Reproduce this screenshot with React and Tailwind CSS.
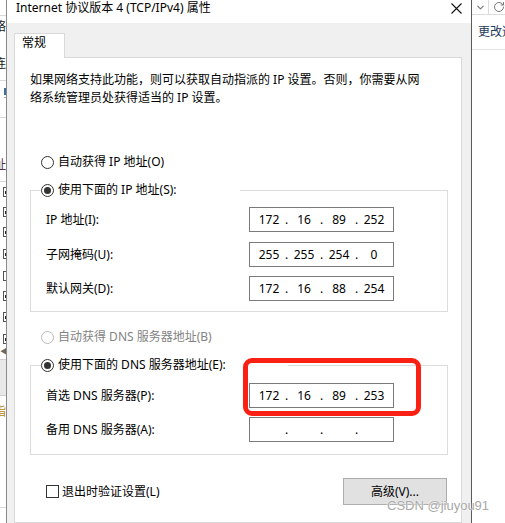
import React from 'react'
import { ChevronDown, RotateCw } from 'lucide-react'

const font = { fontFamily: '"Noto Sans", "Noto Sans CJK SC", sans-serif' }

const Radio = ({ checked, disabled }) => (
  <span
    className={`flex h-[13px] w-[13px] shrink-0 items-center justify-center rounded-full border bg-white ${
      disabled ? 'border-[#bcbcbc]' : 'border-[#333333]'
    }`}
  >
    {checked ? <span className="h-[7px] w-[7px] rounded-full bg-[#333333]" /> : null}
  </span>
)

const RadioLabel = ({ checked, disabled, children }) => (
  <label className="flex h-[18px] items-center gap-[4px]">
    <Radio checked={checked} disabled={disabled} />
    <span className={disabled ? 'text-[#838383]' : 'text-black'}>{children}</span>
  </label>
)

const IpField = ({ parts }) => (
  <div className="flex h-[25px] w-[145px] items-center border border-[#7a7a7a] bg-white pl-[4px]">
    {parts.map((p, i) => (
      <React.Fragment key={i}>
        {i > 0 ? <span className="w-[5px] text-center">.</span> : null}
        <span className="w-[30px] text-center">{p}</span>
      </React.Fragment>
    ))}
  </div>
)

const FieldRow = ({ label, parts, className = '' }) => (
  <div className={`flex h-[25px] items-center pl-[15px] ${className}`}>
    <span className="w-[203px]">{label}</span>
    <IpField parts={parts} />
  </div>
)

const StripCheck = ({ className = '' }) => (
  <div className={`ml-[3px] flex h-[10px] w-[3px] items-center border-y border-l border-[#555] ${className}`}>
    <span className="ml-[1px] h-[3px] w-[2px] bg-[#222]" />
  </div>
)

const LeftStrip = () => (
  <div className="flex w-[6px] shrink-0 flex-col overflow-hidden bg-white text-[12px] leading-[18px] text-[#222]">
    <div className="h-[15px]" />
    <div className="h-px bg-[#d9d9d9]" />
    <div className="mt-[2px] flex h-[18px] justify-end whitespace-nowrap">网络</div>
    <div className="mt-[19px] flex h-[18px] justify-end whitespace-nowrap">连</div>
    <div className="h-[7px]" />
    <div className="h-px bg-[#d9d9d9]" />
    <div className="ml-[4px] mt-[7px] h-[7px] w-[2px] bg-[#3c6e9f]" />
    <div className="ml-[4px] mt-[2px] h-px w-[2px] bg-[#aaa]" />
    <div className="h-[19px]" />
    <div className="h-px bg-[#d9d9d9]" />
    <div className="mt-[38px] flex h-[18px] justify-end whitespace-nowrap text-[#5a2a4a]">址</div>
    <div className="h-[7px]" />
    <div className="h-px bg-[#d9d9d9]" />
    <StripCheck className="mt-[5px]" />
    <StripCheck className="mt-[10px]" />
    <StripCheck className="mt-[10px]" />
    <StripCheck className="mt-[12px]" />
    <div className="ml-[3px] mt-[12px] h-[10px] w-[3px] border-y border-l border-[#555]" />
    <StripCheck className="mt-[10px]" />
    <StripCheck className="mt-[11px]" />
    <StripCheck className="mt-[12px]" />
    <div className="mt-[3px] h-[7px] text-[8px] leading-[7px] text-[#666]">◀</div>
    <div className="mt-[5px] h-[37px] border-y border-[#d0d0d0] bg-[#e8e8e8]" />
    <div className="mt-[7px] flex h-[18px] justify-end whitespace-nowrap text-[#b8860b]">指</div>
    <div className="h-[86px]" />
    <div className="h-px bg-[#d9d9d9]" />
  </div>
)

const RightWindow = () => (
  <div className="flex min-w-0 flex-1 flex-col overflow-hidden bg-white text-[12px] leading-[18px]">
    <div className="flex h-[15px] items-center border-b border-[#dcdcdc]">
      <div className="flex w-[16px] justify-center text-[#777]">
        <ChevronDown size={11} strokeWidth={2.5} />
      </div>
      <div className="h-full w-px bg-[#dcdcdc]" />
      <div className="ml-[4px] text-[#777]">
        <RotateCw size={12} strokeWidth={2} />
      </div>
    </div>
    <div className="flex h-[35px] items-center whitespace-nowrap border-b border-[#e4e4e4] pl-[6px] text-[#1e395b]">
      更改适配器
    </div>
  </div>
)

const App = () => {
  return (
    <div
      className="relative flex h-[523px] w-[505px] overflow-hidden bg-white text-[12px] leading-[18px] text-black"
      style={font}
    >
      <LeftStrip />

      <div className="flex w-[466px] shrink-0 flex-col border-l border-r border-l-[#8a8a8a] border-r-[#5a5a5a]">
        <div className="flex h-[23px] items-start justify-between bg-white pl-[9px] pr-[9px]">
          <span className="leading-[16px]">Internet 协议版本 4 (TCP/IPv4) 属性</span>
          <svg width="11" height="11" viewBox="0 0 11 11" className="mt-[3px]">
            <path d="M0.5 0.5 L10.5 10.5 M10.5 0.5 L0.5 10.5" stroke="#111" strokeWidth="1.1" />
          </svg>
        </div>

        <div className="flex flex-1 flex-col bg-[#f0f0f0] pl-[7px] pt-[10px]">
          <div className="relative z-10 -mb-px h-[25px] w-[51px] border border-b-0 border-[#d9d9d9] bg-white pl-[7px]">
            常规
          </div>

          <div className="flex w-[448px] flex-1 flex-col border border-[#d9d9d9] bg-white pl-[15px] pt-[13px]">
            <p>
              如果网络支持此功能，则可以获取自动指派的 IP 设置。否则，你需要从网
              <br />
              络系统管理员处获得适当的 IP 设置。
            </p>

            <div className="ml-[11px] mt-[46px]">
              <RadioLabel>自动获得 IP 地址(O)</RadioLabel>
            </div>

            <fieldset className="mt-[10px] w-[418px] border border-[#dcdcdc] pb-[10px] pt-[8px]">
              <legend className="ml-[10px] w-[199px]">
                <RadioLabel checked>使用下面的 IP 地址(S):</RadioLabel>
              </legend>
              <FieldRow label="IP 地址(I):" parts={['172', '16', '89', '252']} />
              <FieldRow className="mt-[10px]" label="子网掩码(U):" parts={['255', '255', '254', '0']} />
              <FieldRow className="mt-[9px]" label="默认网关(D):" parts={['172', '16', '88', '254']} />
            </fieldset>

            <div className="ml-[11px] mt-[16px]">
              <RadioLabel disabled>自动获得 DNS 服务器地址(B)</RadioLabel>
            </div>

            <fieldset className="mt-[10px] w-[418px] border border-[#dcdcdc] pb-[12px] pt-[9px]">
              <legend className="ml-[10px] w-[247px]">
                <RadioLabel checked>使用下面的 DNS 服务器地址(E):</RadioLabel>
              </legend>
              <FieldRow label="首选 DNS 服务器(P):" parts={['172', '16', '89', '253']} />
              <FieldRow className="mt-[9px]" label="备用 DNS 服务器(A):" parts={['', '', '', '']} />
            </fieldset>

            <div className="mt-[23px] flex h-[27px] w-[418px] items-center justify-between pl-[16px] pr-px">
              <label className="flex items-center gap-[3px]">
                <span className="h-[13px] w-[13px] border border-[#333333] bg-white" />
                <span>退出时验证设置(L)</span>
              </label>
              <button className="flex h-[27px] w-[104px] items-center justify-center border border-[#adadad] bg-[#e1e1e1]">
                高级(V)...
              </button>
            </div>
          </div>
        </div>
      </div>

      <RightWindow />

      <div className="pointer-events-none absolute left-[243px] top-[358px] h-[58px] w-[178px] rounded-[9px] border-[5px] border-[#fa2114]" />

      <div
        className="pointer-events-none absolute left-[387px] top-[497px] text-[13px] leading-[18px] text-[#a8a8a8] [text-shadow:0_0_2px_#ffffff,0_0_1px_#ffffff]"
        style={{ fontFamily: '"Liberation Sans", Arial, sans-serif' }}
      >
        CSDN @jiuyou91
      </div>
    </div>
  )
}

export default App
